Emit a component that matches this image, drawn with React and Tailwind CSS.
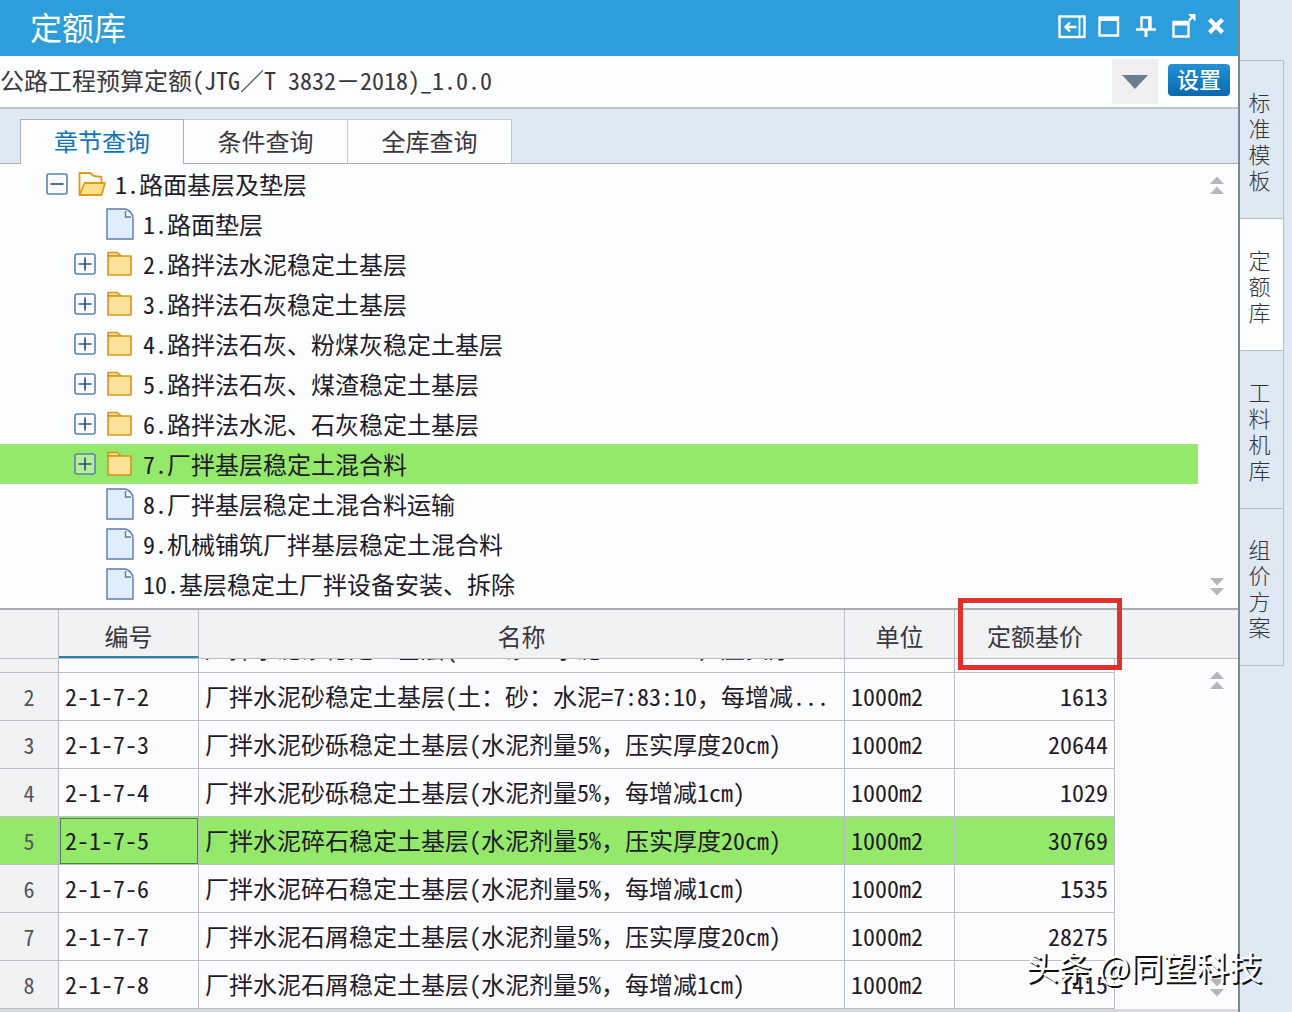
import React, { useState } from "react";
import clsx from "clsx";

const chapters = [
  { no: "1.", name: "路面基层及垫层", type: "open" },
  { no: "1.", name: "路面垫层", type: "file" },
  { no: "2.", name: "路拌法水泥稳定土基层", type: "folder" },
  { no: "3.", name: "路拌法石灰稳定土基层", type: "folder" },
  { no: "4.", name: "路拌法石灰、粉煤灰稳定土基层", type: "folder" },
  { no: "5.", name: "路拌法石灰、煤渣稳定土基层", type: "folder" },
  { no: "6.", name: "路拌法水泥、石灰稳定土基层", type: "folder" },
  { no: "7.", name: "厂拌基层稳定土混合料", type: "folder" },
  { no: "8.", name: "厂拌基层稳定土混合料运输", type: "file" },
  { no: "9.", name: "机械铺筑厂拌基层稳定土混合料", type: "file" },
  { no: "10.", name: "基层稳定土厂拌设备安装、拆除", type: "file" },
];

const quotas = [
  { id: 1, code: "", name: "厂拌水泥砂稳定土基层(土：砂：水泥=7:83:10，压实厚...", unit: "", price: "" },
  { id: 2, code: "2-1-7-2", name: "厂拌水泥砂稳定土基层(土：砂：水泥=7:83:10，每增减...", unit: "1000m2", price: "1613" },
  { id: 3, code: "2-1-7-3", name: "厂拌水泥砂砾稳定土基层(水泥剂量5%，压实厚度20cm)", unit: "1000m2", price: "20644" },
  { id: 4, code: "2-1-7-4", name: "厂拌水泥砂砾稳定土基层(水泥剂量5%，每增减1cm)", unit: "1000m2", price: "1029" },
  { id: 5, code: "2-1-7-5", name: "厂拌水泥碎石稳定土基层(水泥剂量5%，压实厚度20cm)", unit: "1000m2", price: "30769" },
  { id: 6, code: "2-1-7-6", name: "厂拌水泥碎石稳定土基层(水泥剂量5%，每增减1cm)", unit: "1000m2", price: "1535" },
  { id: 7, code: "2-1-7-7", name: "厂拌水泥石屑稳定土基层(水泥剂量5%，压实厚度20cm)", unit: "1000m2", price: "28275" },
  { id: 8, code: "2-1-7-8", name: "厂拌水泥石屑稳定土基层(水泥剂量5%，每增减1cm)", unit: "1000m2", price: "1415" },
];

const tabs = ["章节查询", "条件查询", "全库查询"];

const sideTabs = [
  { name: "标准模板", height: "h-[158px]" },
  { name: "定额库", height: "h-[132px]" },
  { name: "工料机库", height: "h-[158px]" },
  { name: "组价方案", height: "h-[158px]" },
];

// The half-width font feature also narrows these signs, so it is switched off for them
function Mixed({ text }) {
  return text.split(/([，／－：]+)/).map((part, i) =>
    i % 2 ? (
      <span key={i} className="[font-feature-settings:normal]">
        {part}
      </span>
    ) : (
      part
    )
  );
}

function FileIcon() {
  return (
    <svg width="28" height="32" viewBox="0 0 28 32" fill="#e0edfa" stroke="#5b7ba6" strokeWidth="1.4">
      <path d="M1 1h18.500q7.500 3 7.500 9v21H1z" />
      <path d="M19.500 3v6H25" fill="#fff" />
    </svg>
  );
}

function FolderIcon() {
  return (
    <svg width="28" height="32" viewBox="0 0 28 32" fill="#ffe29a" stroke="#d9921d" strokeWidth="1.6" strokeLinejoin="round">
      <path d="M2 8V4.500h9.500l3.500 3.500z" />
      <path d="M2 8h23v19H2z" />
    </svg>
  );
}

function OpenFolderIcon() {
  return (
    <svg width="28" height="32" viewBox="0 0 28 32" stroke="#e09a1c" strokeWidth="1.8" strokeLinejoin="round">
      <path d="M1.500 27V5H12l4 3 7.500 1v6" fill="#fffdf5" />
      <path d="M6.500 15H27l-3.500 12h-22z" fill="#ffe08a" />
    </svg>
  );
}

function Toggle({ open }) {
  return (
    <button className="h-[22px] w-[22px] shrink-0" aria-label={open ? "收起" : "展开"}>
      <svg width="22" height="22" viewBox="0 0 22 22" fill="none">
        <rect x="1" y="1" width="20" height="20" rx="2" fill="#fff" fillOpacity="0.3" stroke="#5b82b0" strokeWidth="1.6" />
        <path d={open ? "M4.500 11h13" : "M4.500 11h13M11 4.500v13"} stroke="#2b5288" strokeWidth="1.7" />
      </svg>
    </button>
  );
}

function Arrows({ down }) {
  return (
    <button className="block" aria-label={down ? "向下翻页" : "向上翻页"}>
      <svg width="14" height="18" viewBox="0 0 14 18" fill="#b5b6bb">
        <path d={down ? "M0 0h14L7 7.500zM0 10h14L7 17.500z" : "M0 8h14L7 .5zM0 18h14L7 10.500z"} />
      </svg>
    </button>
  );
}

function ScrollBar() {
  return (
    <div className="flex w-10 shrink-0 flex-col items-center justify-between pt-3 pr-0.5 pb-3">
      <Arrows />
      <Arrows down />
    </div>
  );
}

function TitleBar() {
  return (
    <header className="flex h-[56px] shrink-0 items-center justify-between bg-[#2e9ddb] pr-[14px] pl-[30px] text-white">
      <h1 className="pb-1 text-[32px] leading-[50px]">定额库</h1>
      <div className="flex items-center gap-3 pb-0.5">
        <button aria-label="收起面板">
          <svg width="28" height="28" viewBox="0 0 28 28" fill="none" stroke="#fff" strokeWidth="2.4">
            <rect x="1.500" y="3.500" width="25" height="20.500" />
            <path d="M21.500 4v20" strokeWidth="1.800" />
            <path d="M18.500 14H8M12 9.500L7.500 14l4.500 4.500" />
          </svg>
        </button>
        <button aria-label="最大化">
          <svg width="22" height="28" viewBox="0 0 22 28" fill="none" stroke="#fff" strokeWidth="2.400">
            <rect x="1.500" y="4.500" width="18.500" height="18" />
            <path d="M1 6h19.500" strokeWidth="4" />
          </svg>
        </button>
        <button className="px-1" aria-label="固定">
          <svg width="20" height="28" viewBox="0 0 20 28" fill="none" stroke="#fff" strokeWidth="2.400">
            <path d="M5.500 16V4.500h9V16M0 16.500h20" />
            <path d="M10 16v8" strokeWidth="3" />
            <path d="M13.500 5v11" strokeWidth="3" />
          </svg>
        </button>
        <button aria-label="弹出窗口">
          <svg width="24" height="28" viewBox="0 0 24 28" fill="none" stroke="#fff" strokeWidth="2.400">
            <path d="M1.500 9h15v14.500h-15z" />
            <path d="M1 10.500h16" strokeWidth="4" />
            <path d="M17 7.500l4.500-4.500" />
            <path d="M16 1h7.500v7.500z" fill="#fff" stroke="none" />
          </svg>
        </button>
        <button aria-label="关闭">
          <svg width="16" height="28" viewBox="0 0 16 28" fill="none" stroke="#fff" strokeWidth="4.400">
            <path d="M1.500 6.500l13 13M14.500 6.500l-13 13" />
          </svg>
        </button>
      </div>
    </header>
  );
}

function Tree({ selected, onSelect }) {
  return (
    <div className="flex h-[446px] shrink-0 border-b-2 border-[#a9acb2] bg-[#fcfdff]">
      <ul className="min-w-0 flex-1">
        {chapters.map((item, i) => (
          <li
            key={i}
            onClick={() => onSelect(i)}
            className={clsx(
              "flex h-10 items-center",
              i === 0 ? "pl-[46px]" : "pl-[74px]",
              i === selected && "bg-[#94e86a]"
            )}
          >
            {item.type === "file" ? <span className="w-[22px]" /> : <Toggle open={item.type === "open"} />}
            <span className="mr-[9px] ml-[10px]">
              {item.type === "open" && <OpenFolderIcon />}
              {item.type === "folder" && <FolderIcon />}
              {item.type === "file" && <FileIcon />}
            </span>
            <span className="whitespace-nowrap">
              {item.no}
              {item.name}
            </span>
          </li>
        ))}
      </ul>
      <ScrollBar />
    </div>
  );
}

function Columns() {
  return (
    <colgroup>
      <col className="w-[59px]" />
      <col className="w-[140px]" />
      <col />
      <col className="w-[110px]" />
      <col className="w-[160px]" />
    </colgroup>
  );
}

function QuotaTable() {
  const [active, setActive] = useState(5);
  const cell = "h-12 border-r border-b border-[#b9bec4] px-[6px] pt-0 pb-0.5";

  return (
    <>
      <div className="relative h-[49px] shrink-0 border-b border-[#b9bcc0] bg-[#f1f2f4] pr-[123px]">
        <table className="w-full table-fixed border-separate border-spacing-0">
          <Columns />
          <thead>
            <tr className="text-[#3a3740]">
              <th className="h-12 border-r border-[#b9bec4]" aria-label="序号" />
              <th className="h-12 border-r border-b-2 border-[#b9bec4] border-b-[#2a81b4] p-0 pt-1.5 font-normal">编号</th>
              <th className="h-12 border-r border-[#b9bec4] p-0 pt-1 font-normal">名称</th>
              <th className="h-12 border-r border-[#b9bec4] p-0 pt-1 font-normal">单位</th>
              <th className="relative h-12 p-0 pt-1 font-normal">
                定额基价
                <span className="absolute -top-3 -right-[7px] -bottom-3 left-[3px] z-10 border-[5px] border-[#df322d]" />
              </th>
            </tr>
          </thead>
        </table>
      </div>
      <div className="flex min-h-0 flex-1 bg-[#fcfcff]">
        {/* scrolled so that the last row ends at the bottom edge */}
        <div className="flex min-w-0 flex-1 flex-col justify-end overflow-hidden pr-[83px]">
          <table className="w-full shrink-0 table-fixed border-separate border-spacing-0">
            <Columns />
            <tbody>
              {quotas.map((row) => (
                <tr
                  key={row.id}
                  onClick={() => setActive(row.id)}
                  className={clsx("leading-8 whitespace-nowrap", row.id === active && "bg-[#94e86a]")}
                >
                  <td
                    className={clsx(
                      cell,
                      "text-center text-[22px] text-[#55525c]",
                      row.id !== active && "bg-[#f1f2f4]"
                    )}
                  >
                    {row.id}
                  </td>
                  <td className={clsx(cell, row.id === active && "outline outline-1 -outline-offset-2 outline-[#3f8a35]")}>
                    {row.code}
                  </td>
                  <td className={cell}>
                    <Mixed text={row.name} />
                  </td>
                  <td className={cell}>{row.unit}</td>
                  <td className={clsx(cell, "text-right")}>{row.price}</td>
                </tr>
              ))}
            </tbody>
          </table>
        </div>
        <ScrollBar />
      </div>
    </>
  );
}

export default function App() {
  const [tab, setTab] = useState(0);
  const [side, setSide] = useState(1);
  const [selected, setSelected] = useState(7);

  return (
    <div className="relative flex h-screen overflow-hidden bg-[#dfe9f3] font-['Noto_Sans_CJK_SC',sans-serif] text-[24px] leading-9 text-[#1f1b2b] [font-feature-settings:'hwid']">
      <main className="flex min-w-0 flex-1 flex-col border-r-2 border-[#7d8794]">
        <TitleBar />

        <div className="flex h-[51px] shrink-0 items-center bg-[#fcfdff] pr-2 text-[#3a3740]">
          <p className="min-w-0 flex-1 pb-1 whitespace-nowrap">
            <Mixed text="公路工程预算定额(JTG／T 3832－2018)_1.0.0" />
          </p>
          <button className="mr-[10px] flex h-[45px] w-[46px] items-center justify-center bg-[#efeff1]" aria-label="选择定额">
            <svg width="26" height="14" viewBox="0 0 26 14" fill="#6b7d90">
              <path d="M0 0h26L13 14z" />
            </svg>
          </button>
          <button className="mb-1 h-8 w-[62px] rounded bg-linear-to-b from-[#2391d6] to-[#0a68ae] pb-1 text-[22px] leading-7 font-medium text-white">
            设置
          </button>
        </div>

        <nav className="flex h-[57px] shrink-0 items-end border-t-2 border-[#bcc4cc]">
          <div className="w-5 self-stretch border-b border-[#a9b0b8]" />
          {tabs.map((name, i) => (
            <button
              key={name}
              onClick={() => setTab(i)}
              className={clsx(
                "h-[45px] w-[164px] border-t border-r bg-[#fcfdff] pb-0.5",
                i === tab
                  ? "border-l border-[#a9b0b8] text-[#0f73b8]"
                  : "border-b border-[#c5cad0] border-b-[#a9b0b8] text-[#3a3740]"
              )}
            >
              {name}
            </button>
          ))}
          <div className="flex-1 self-stretch border-b border-[#a9b0b8]" />
        </nav>

        <Tree selected={selected} onSelect={setSelected} />
        <QuotaTable />
        <div className="h-[3px] shrink-0 bg-[#d9d8dd]" />
      </main>

      <aside className="flex w-[52px] shrink-0 flex-col pt-[60px] pr-2">
        {sideTabs.map((item, i) => (
          <button
            key={item.name}
            onClick={() => setSide(i)}
            className={clsx(
              "flex items-center justify-center border-t border-r border-[#b4bfca] pr-1 text-[22px] leading-[26px] font-light text-[#33333a] last:border-b",
              item.height,
              i === side && "bg-[#fcfdff]"
            )}
          >
            <span className="w-[22px] break-all">{item.name}</span>
          </button>
        ))}
      </aside>

      <p className="absolute right-[30px] bottom-[22px] text-[33px] leading-[48px] text-white [font-feature-settings:normal] text-shadow-[2px_2px_0_#111]">
        头条 @同望科技
      </p>
    </div>
  );
}
